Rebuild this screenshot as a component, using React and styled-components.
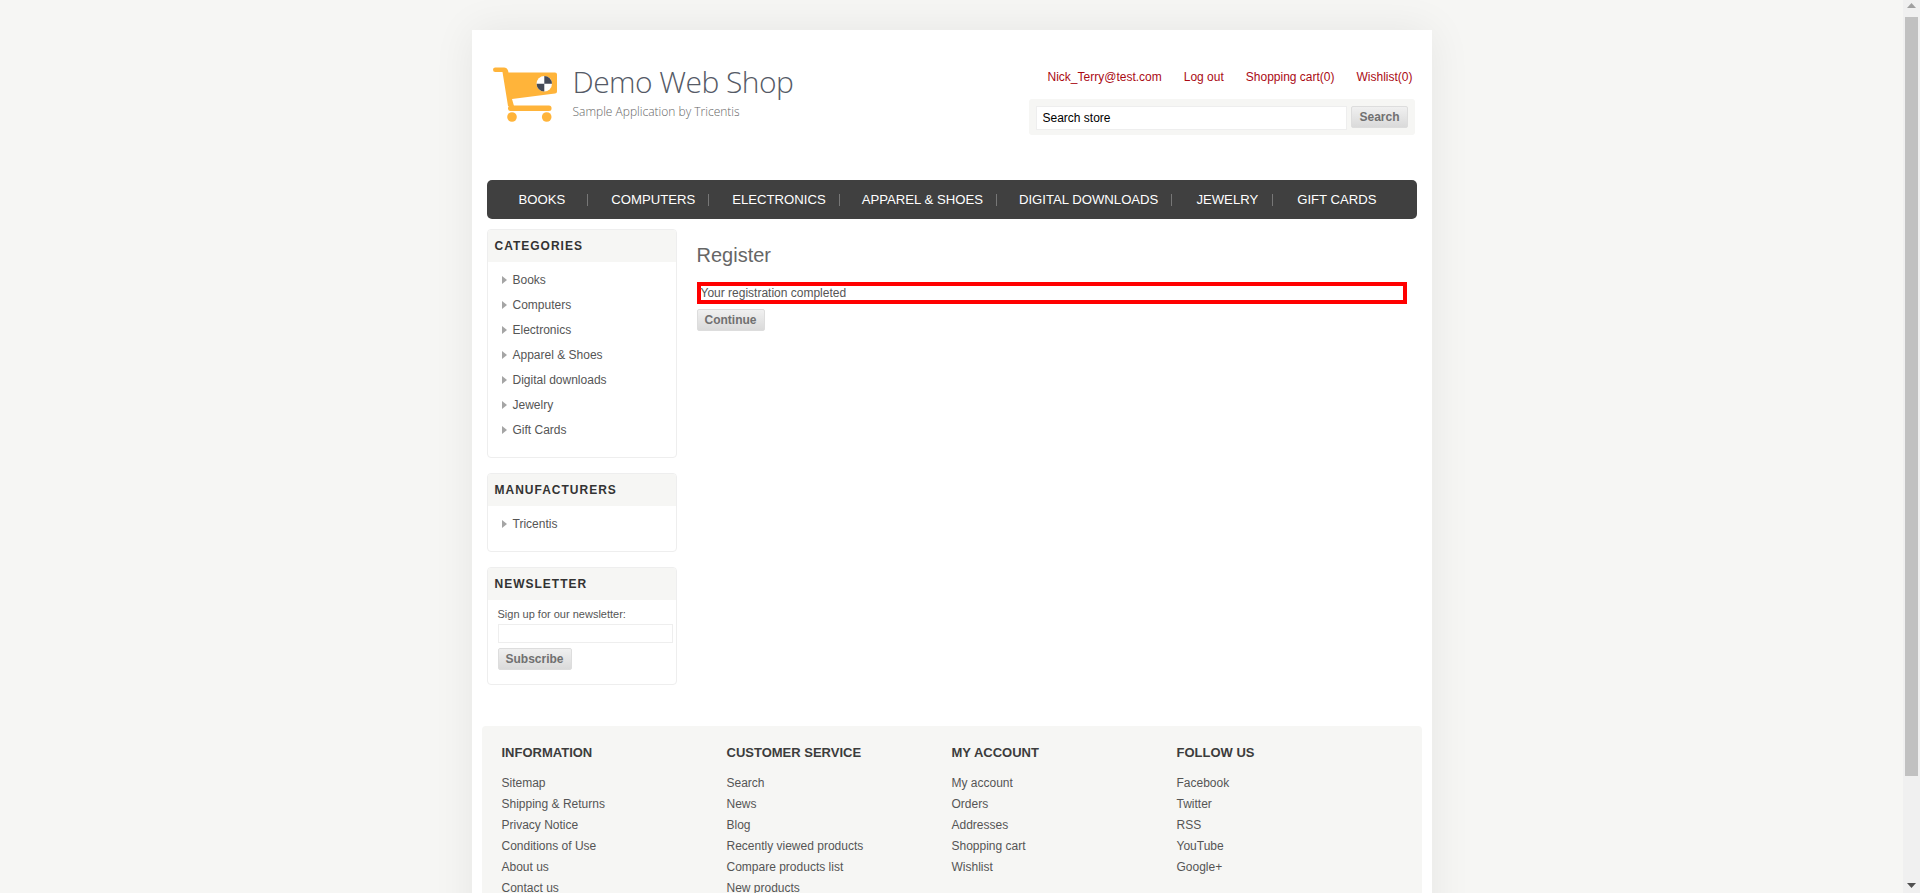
import React from 'react';
import styled, { createGlobalStyle } from 'styled-components';

const GlobalStyle = createGlobalStyle`
  html, body {
    margin: 0;
    padding: 0;
    height: 100%;
    overflow: hidden;
    background: #f6f6f4;
  }
  * { box-sizing: border-box; }
`;

const Screen = styled.div`
  display: flex;
  height: 893px;
  font-family: "Liberation Sans", Arial, sans-serif;
  font-size: 12px;
  color: #444;
`;

const Viewport = styled.div`
  flex: 1;
  min-width: 0;
  overflow: hidden;
  padding-top: 30px;
`;

const Sheet = styled.div`
  width: 960px;
  margin: 0 auto;
  background: #fff;
  box-shadow: 0 0 40px rgba(0, 0, 0, 0.07);
  padding: 0 15px;
  min-height: 1000px;
`;

const Header = styled.header`
  display: flex;
  justify-content: space-between;
  height: 150px;
  padding: 37px 2px 0 5px;
`;

const LogoLink = styled.a`
  display: flex;
  align-items: flex-start;
  gap: 15px;
`;

const LogoText = styled.div`
  font-family: "Open Sans", sans-serif;
  font-weight: 300;
  color: #555a66;
  margin-top: -7px;
`;

const LogoTitle = styled.div`
  font-size: 30px;
  line-height: 44px;
  letter-spacing: -0.55px;
`;

const LogoSub = styled.div`
  font-size: 12px;
  line-height: 14px;
  margin-top: 1px;
  color: #666;
`;

const HeaderRight = styled.div`
  display: flex;
  flex-direction: column;
  align-items: flex-end;
`;

const HeaderLinks = styled.div`
  display: flex;
  gap: 22px;
  height: 32px;
  padding-top: 3px;
  margin-right: 2px;
  line-height: 14px;
`;

const HeaderLink = styled.a`
  color: #aa0a14;
`;

const SearchBar = styled.div`
  display: flex;
  align-items: flex-start;
  gap: 4px;
  width: 386px;
  height: 36px;
  padding: 7px;
  background: #f6f6f4;
  border-radius: 3px;
`;

const SearchInput = styled.div`
  width: 312px;
  height: 24px;
  padding-left: 6px;
  line-height: 22px;
  color: #000;
  background: #fff;
  border: 1px solid #eee;
`;

const GreyButton = styled.button`
  display: block;
  height: 22px;
  padding: 0 7px;
  font-family: inherit;
  font-size: 12px;
  font-weight: 700;
  color: #707070;
  background: linear-gradient(#f0f0f0, #dadada);
  border: 1px solid #ddd;
  border-radius: 2px;
`;

const NavBar = styled.nav`
  display: flex;
  align-items: center;
  height: 39px;
  padding-left: 32px;
  background: #404040;
  border-radius: 5px;
`;

const NavItem = styled.a`
  font-size: 13.15px;
  color: #fff;
  white-space: nowrap;
`;

const NavSep = styled.span`
  width: 1px;
  height: 12px;
  background: #777;
  margin: 0 ${p => p.$r}px 0 ${p => p.$l}px;
`;

const Columns = styled.div`
  display: flex;
  gap: 20px;
  margin-top: 10px;
`;

const Side = styled.aside`
  display: flex;
  flex-direction: column;
  gap: 15px;
  width: 190px;
`;

const Block = styled.section`
  border: 1px solid #eee;
  border-radius: 4px;
  overflow: hidden;
`;

const BlockTitle = styled.h3`
  margin: 0;
  height: 32px;
  padding-left: 7px;
  background: #f6f6f4;
  font-size: 12px;
  line-height: 32px;
  letter-spacing: 1px;
  font-weight: 700;
  color: #333;
`;

const List = styled.ul`
  list-style: none;
  margin: 0;
  padding: 5px 0 15px 14px;
`;

const ListItem = styled.li`
  display: flex;
  align-items: center;
  gap: 6px;
  height: 25px;
  color: #555;
`;

const Arrow = styled.span`
  width: 0;
  height: 0;
  border-left: 5px solid #a5a5a5;
  border-top: 4px solid transparent;
  border-bottom: 4px solid transparent;
`;

const Newsletter = styled.div`
  padding: 7px 3px 14px 10px;
`;

const NewsLabel = styled.div`
  font-size: 11px;
  line-height: 14px;
  color: #555;
`;

const NewsInput = styled.div`
  width: 175px;
  height: 19px;
  margin: 3px 0 5px;
  border: 1px solid #eee;
`;

const Main = styled.main`
  flex: 1;
  padding: 13px 10px 0 0;
`;

const PageTitle = styled.h1`
  margin: 0;
  font-size: 20px;
  font-weight: 400;
  line-height: 26px;
  color: #666;
`;

const Result = styled.div`
  height: 22px;
  margin: 14px 0 5px;
  border: 4px solid #f00;
  line-height: 14px;
  color: #555;
`;

const Footer = styled.footer`
  display: grid;
  grid-template-columns: repeat(4, 225px);
  margin: 41px 0 0 -5px;
  width: 940px;
  height: 300px;
  padding: 19px 20px;
  background: #f6f6f4;
  border-radius: 4px;
`;

const FooterTitle = styled.h3`
  margin: 0 0 12px;
  font-size: 13px;
  line-height: 16px;
  font-weight: 700;
  color: #3c3c3c;
`;

const FooterLink = styled.div`
  height: 21px;
  line-height: 21px;
  color: #555;
`;

const Scrollbar = styled.div`
  position: relative;
  width: 17px;
  height: 893px;
  background: #f0f0f0;
`;

const ScrollThumb = styled.div`
  position: absolute;
  top: 17px;
  left: 2px;
  width: 13px;
  height: 759px;
  background: #c1c1c1;
`;

const ScrollArrow = styled.svg`
  position: absolute;
  left: 4px;
  width: 9px;
  height: 5px;
  ${p => p.$down ? 'bottom: 5px;' : 'top: 3px;'}
`;

const CartLogo = () => (
  <svg width="66" height="56" viewBox="0 0 66 56">
    <path d="M3.25 .5H12q3 0 4 3l.5 2H63q2 0 2 2v17q0 2-2 2L20 32l2 7h-6L10.5 5H3.25a2.25 2.25 0 0 1 0-4.5z" fill="#ffb43a" />
    <rect x="16" y="38.5" width="43.5" height="5.5" rx="2.5" fill="#ffb43a" />
    <circle cx="20" cy="50" r="4.8" fill="#ffb43a" />
    <circle cx="54.7" cy="50" r="4.8" fill="#ffb43a" />
    <circle cx="52.3" cy="16.7" r="7.7" fill="#fff" />
    <path d="M52.3 16.7V9a7.7 7.7 0 0 1 7.7 7.7zM52.3 16.7v7.7a7.7 7.7 0 0 1-7.7-7.7z" fill="#454a58" />
  </svg>
);

const navItems = [
  ['BOOKS', 22, 23], ['COMPUTERS', 13, 23], ['ELECTRONICS', 13, 22],
  ['APPAREL & SHOES', 13, 22], ['DIGITAL DOWNLOADS', 13, 24], ['JEWELRY', 14, 24], ['GIFT CARDS'],
];
const categories = ['Books', 'Computers', 'Electronics', 'Apparel & Shoes', 'Digital downloads', 'Jewelry', 'Gift Cards'];
const footerCols = [
  ['INFORMATION', ['Sitemap', 'Shipping & Returns', 'Privacy Notice', 'Conditions of Use', 'About us', 'Contact us']],
  ['CUSTOMER SERVICE', ['Search', 'News', 'Blog', 'Recently viewed products', 'Compare products list', 'New products']],
  ['MY ACCOUNT', ['My account', 'Orders', 'Addresses', 'Shopping cart', 'Wishlist']],
  ['FOLLOW US', ['Facebook', 'Twitter', 'RSS', 'YouTube', 'Google+']],
];

export default function App() {
  return (
    <Screen>
      <GlobalStyle />
      <Viewport>
        <Sheet>
          <Header>
            <LogoLink>
              <CartLogo />
              <LogoText>
                <LogoTitle>Demo Web Shop</LogoTitle>
                <LogoSub>Sample Application by Tricentis</LogoSub>
              </LogoText>
            </LogoLink>
            <HeaderRight>
              <HeaderLinks>
                <HeaderLink>Nick_Terry@test.com</HeaderLink>
                <HeaderLink>Log out</HeaderLink>
                <HeaderLink>Shopping cart(0)</HeaderLink>
                <HeaderLink>Wishlist(0)</HeaderLink>
              </HeaderLinks>
              <SearchBar>
                <SearchInput>Search store</SearchInput>
                <GreyButton>Search</GreyButton>
              </SearchBar>
            </HeaderRight>
          </Header>
          <NavBar>
            {navItems.map(([label, l, r]) => (
              <React.Fragment key={label}>
                <NavItem>{label}</NavItem>
                {l && <NavSep $l={l} $r={r} />}
              </React.Fragment>
            ))}
          </NavBar>
          <Columns>
            <Side>
              <Block>
                <BlockTitle>CATEGORIES</BlockTitle>
                <List>
                  {categories.map(c => <ListItem key={c}><Arrow />{c}</ListItem>)}
                </List>
              </Block>
              <Block>
                <BlockTitle>MANUFACTURERS</BlockTitle>
                <List>
                  <ListItem><Arrow />Tricentis</ListItem>
                </List>
              </Block>
              <Block>
                <BlockTitle>NEWSLETTER</BlockTitle>
                <Newsletter>
                  <NewsLabel>Sign up for our newsletter:</NewsLabel>
                  <NewsInput />
                  <GreyButton>Subscribe</GreyButton>
                </Newsletter>
              </Block>
            </Side>
            <Main>
              <PageTitle>Register</PageTitle>
              <Result>Your registration completed</Result>
              <GreyButton>Continue</GreyButton>
            </Main>
          </Columns>
          <Footer>
            {footerCols.map(([title, links]) => (
              <div key={title}>
                <FooterTitle>{title}</FooterTitle>
                {links.map(l => <FooterLink key={l}>{l}</FooterLink>)}
              </div>
            ))}
          </Footer>
        </Sheet>
      </Viewport>
      <Scrollbar>
        <ScrollArrow viewBox="0 0 9 5"><path d="M4.5 0L9 5H0z" fill="#a0a0a0" /></ScrollArrow>
        <ScrollThumb />
        <ScrollArrow $down viewBox="0 0 9 5"><path d="M0 0h9L4.5 5z" fill="#505050" /></ScrollArrow>
      </Scrollbar>
    </Screen>
  );
}
